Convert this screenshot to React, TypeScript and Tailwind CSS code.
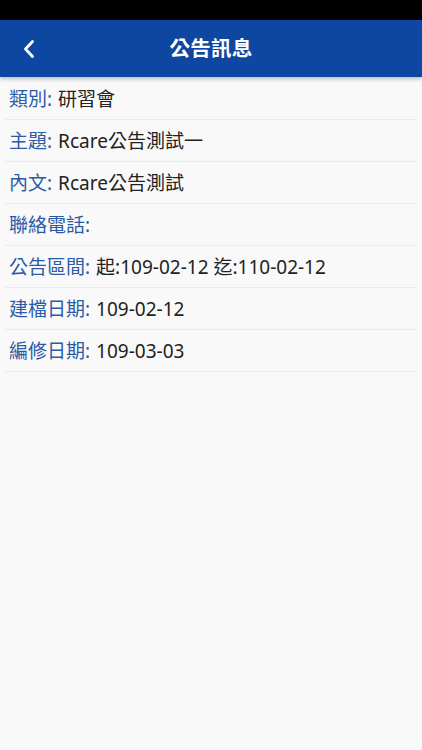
const rows: { label: string; value: string }[] = [
  { label: "類別", value: "研習會" },
  { label: "主題", value: "Rcare公告測試一" },
  { label: "內文", value: "Rcare公告測試" },
  { label: "聯絡電話", value: "" },
  { label: "公告區間", value: "起:109-02-12 迄:110-02-12" },
  { label: "建檔日期", value: "109-02-12" },
  { label: "編修日期", value: "109-03-03" },
];

const font = "font-['Noto_Sans','Noto_Sans_CJK_TC',sans-serif]";

export default function App() {
  return (
    <div className={`w-[422px] h-[750px] bg-[#f9f9f9] flex flex-col ${font}`}>
      <div className="h-5 bg-black" />
      <header className="relative h-[57px] bg-[#0d47a1] flex items-center justify-center shadow-[0_2px_4px_rgba(0,0,0,0.25)] z-10">
        <button className="absolute left-[20px] top-[17px] w-[18px] h-[24px] flex items-center justify-center">
          <svg width="18" height="24" viewBox="0 0 18 24" fill="none">
            <path d="M12.5 4.5 L5.5 12 L12.5 19.5" stroke="white" strokeWidth="2.8" strokeLinecap="round" strokeLinejoin="round" />
          </svg>
        </button>
        <h1 className="text-white text-[20.5px] font-bold tracking-[0.3px]">公告訊息</h1>
      </header>
      <ul className="px-[5px] mt-[1px]">
        {rows.map((r) => (
          <li key={r.label} className="h-[42px] flex items-center border-b border-[#ebebeb] pl-[4px] pt-[1px] text-[19px] leading-none">
            <span className="text-[#2b5ba6]">{r.label}:</span>
            {r.value && <span className="ml-[6px] text-[#222]">{r.value}</span>}
          </li>
        ))}
      </ul>
    </div>
  );
}
